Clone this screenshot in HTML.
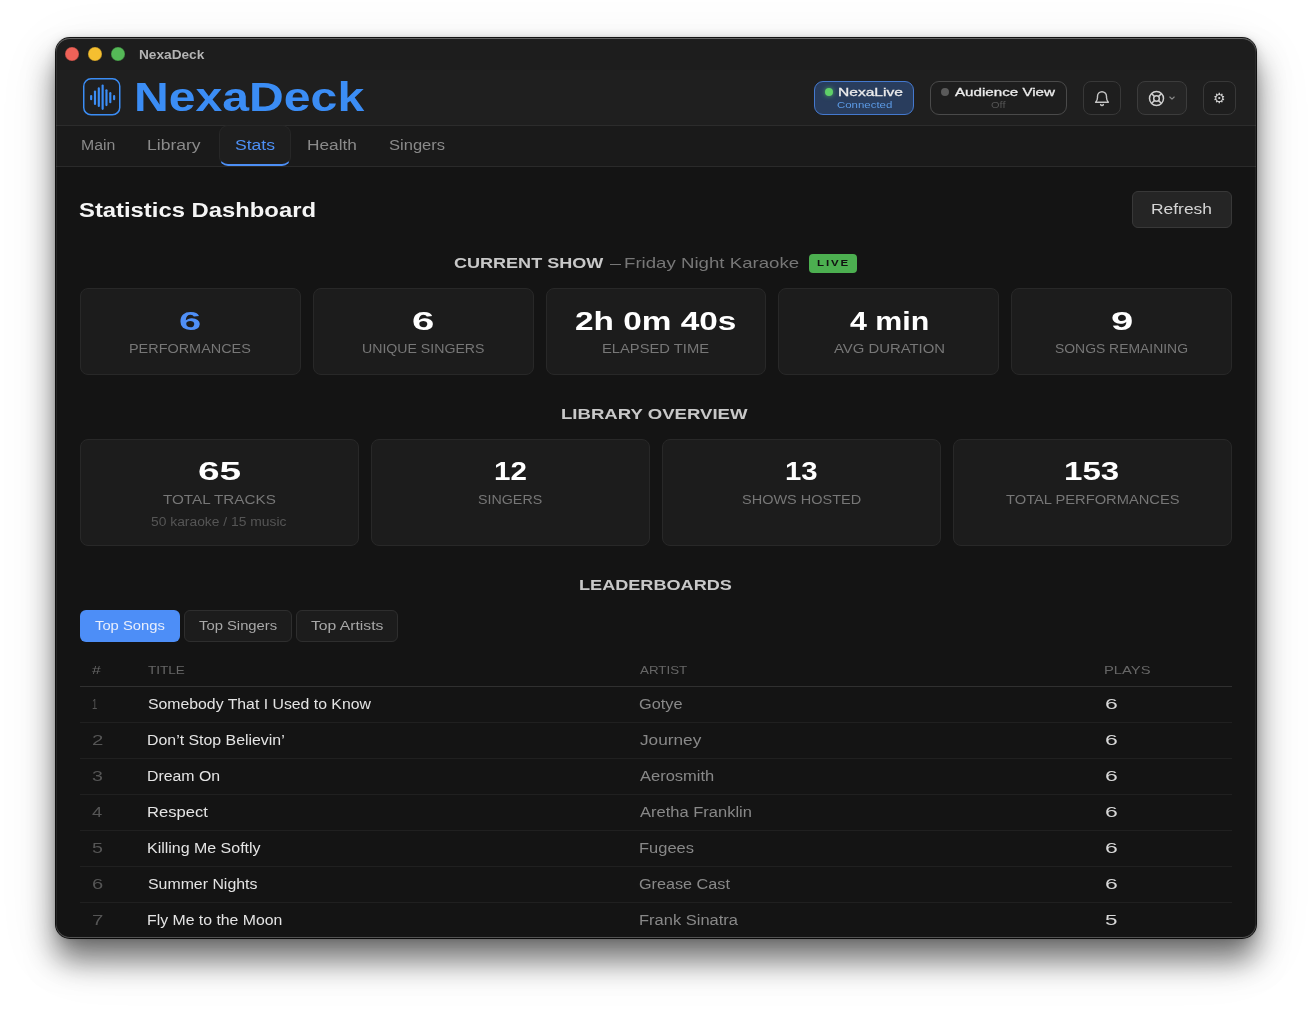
<!DOCTYPE html>
<html lang="en"><head><meta charset="utf-8"><title>NexaDeck</title>
<style>
html,body{margin:0;padding:0;}
body{width:1312px;height:1012px;background:#fff;overflow:hidden;position:relative;font-family:"Liberation Sans", Arial, sans-serif;}
#shadow{position:absolute;left:56px;top:38px;width:1200px;height:900px;border-radius:14px;
box-shadow:0 0 0 1px rgba(0,0,0,.9),0 22px 30px rgba(0,0,0,.52),0 2px 12px rgba(0,0,0,.15),0 16px 60px rgba(0,0,0,.1),0 0 3px rgba(0,0,0,.25);}
#win{position:absolute;left:56px;top:38px;width:1200px;height:900px;border-radius:14px;overflow:hidden;background:#141414;will-change:transform;}
#win:after{content:"";position:absolute;left:0;top:0;right:0;bottom:0;border-radius:14px;box-shadow:inset 0 1px 0 rgba(255,255,255,.28),inset 0 -1px 0 rgba(255,255,255,.22),inset 0 0 0 1px rgba(255,255,255,.07);pointer-events:none;}
.b{position:absolute;}
.t{position:absolute;white-space:nowrap;line-height:1;transform-origin:0 50%;}
</style></head><body>
<div id="shadow"></div>
<div id="win">
<div class="b " style="left:0px;top:0px;width:1200px;height:32px;background:#1d1d1d;"></div>
<div class="b " style="left:0px;top:32px;width:1200px;height:55.5px;background:#1f1f1f;"></div>
<div class="b " style="left:0px;top:87px;width:1200px;height:1px;background:#2c2c2c;"></div>
<div class="b " style="left:0px;top:88px;width:1200px;height:40px;background:#1a1a1a;"></div>
<div class="b " style="left:0px;top:128px;width:1200px;height:1px;background:#2a2a2a;"></div>
<div class="b " style="left:9px;top:9px;width:14px;height:14px;border-radius:50%;background:#ee6258;box-shadow:inset 0 0 0 .5px rgba(0,0,0,.25);"></div>
<div class="b " style="left:32px;top:9px;width:14px;height:14px;border-radius:50%;background:#f5bf30;box-shadow:inset 0 0 0 .5px rgba(0,0,0,.25);"></div>
<div class="b " style="left:55px;top:9px;width:14px;height:14px;border-radius:50%;background:#55b857;box-shadow:inset 0 0 0 .5px rgba(0,0,0,.25);"></div>
<span class="t" id="t0" style="left:83.49px;top:9.80px;font-size:13px;font-weight:700;color:#b4b4b4;transform:scaleX(1.0506);">NexaDeck</span>
<svg class="b" style="left:27.3px;top:40.3px" width="37.5" height="37.6" viewBox="0 0 38 38"><rect x="0.75" y="0.75" width="36.5" height="36.5" rx="7.5" fill="none" stroke="#3b8df5" stroke-width="1.5"/><rect x="7.16" y="17.20" width="2.2" height="5.4" rx="1.1" fill="#3b8df5"/><rect x="11.04" y="12.50" width="2.2" height="14.8" rx="1.1" fill="#3b8df5"/><rect x="14.92" y="9.40" width="2.2" height="20" rx="1.1" fill="#3b8df5"/><rect x="18.80" y="6.50" width="2.2" height="25.8" rx="1.1" fill="#3b8df5"/><rect x="22.68" y="11.30" width="2.2" height="17.2" rx="1.1" fill="#3b8df5"/><rect x="26.56" y="14.20" width="2.2" height="11.4" rx="1.1" fill="#3b8df5"/><rect x="30.44" y="17.20" width="2.2" height="5.4" rx="1.1" fill="#3b8df5"/></svg>
<span class="t" id="t1" style="left:77.58px;top:38.84px;font-size:40px;font-weight:700;color:#3b8df5;transform:scaleX(1.2035);">NexaDeck</span>
<div class="b " style="left:758px;top:43px;width:100px;height:34px;box-sizing:border-box;border:1px solid #4479cf;border-radius:9px;background:#293d5d;"></div>
<div class="b " style="left:769px;top:50px;width:8px;height:8px;border-radius:50%;background:#5fd068;box-shadow:0 0 5px rgba(95,208,104,.7);"></div>
<span class="t" id="t2" style="left:782.22px;top:48.18px;font-size:11.6px;font-weight:400;color:#ececec;transform:scaleX(1.3435);-webkit-text-stroke:0.3px #ececec;">NexaLive</span>
<span class="t" id="t3" style="left:780.72px;top:62.36px;font-size:9.5px;font-weight:400;color:#5c9be6;transform:scaleX(1.2039);">Connected</span>
<div class="b " style="left:874px;top:43px;width:137px;height:34px;box-sizing:border-box;border:1px solid #4a4a4a;border-radius:9px;background:#1e1e1e;"></div>
<div class="b " style="left:885px;top:50px;width:8px;height:8px;border-radius:50%;background:#5a5a5a;"></div>
<span class="t" id="t4" style="left:899.37px;top:48.18px;font-size:11.6px;font-weight:400;color:#ececec;transform:scaleX(1.3066);-webkit-text-stroke:0.3px #ececec;">Audience View</span>
<span class="t" id="t5" style="left:934.98px;top:62.36px;font-size:9.5px;font-weight:400;color:#555;transform:scaleX(1.1608);">Off</span>
<div class="b " style="left:1027px;top:43px;width:38px;height:34px;box-sizing:border-box;border:1px solid #383838;border-radius:8px;background:#1e1e1e;"></div>
<svg class="b" style="left:1038px;top:52px" width="16" height="17" viewBox="0 0 16 17" fill="none" stroke="#c4c4c4" stroke-width="1.4" stroke-linecap="round" stroke-linejoin="round"><path d="M1.6 12.2h12.8c-1.3-1.2-1.9-2.6-1.9-4.6V6.3a4.5 4.5 0 0 0-9 0v1.3c0 2-.6 3.4-1.9 4.6z"/><path d="M6.6 14.6a1.6 1.6 0 0 0 2.8 0"/></svg>
<div class="b " style="left:1081px;top:43px;width:50px;height:34px;box-sizing:border-box;border:1px solid #3c3c3c;border-radius:8px;background:#252525;"></div>
<svg class="b" style="left:1092px;top:51.5px" width="17" height="17" viewBox="0 0 17 17" fill="none" stroke="#cfcfcf" stroke-width="1.5"><circle cx="8.5" cy="8.5" r="7"/><circle cx="8.5" cy="8.5" r="2.8"/><path d="M3.6 3.6l2.9 2.9M13.4 3.6l-2.9 2.9M3.6 13.4l2.9-2.9M13.4 13.4l-2.9-2.9"/></svg>
<svg class="b" style="left:1113px;top:57.8px" width="6" height="5" viewBox="0 0 6 5" fill="none" stroke="#8a8a8a" stroke-width="1.1" stroke-linecap="round" stroke-linejoin="round"><path d="M0.8 1l2.2 2.2L5.2 1"/></svg>
<div class="b " style="left:1147px;top:43px;width:33px;height:34px;box-sizing:border-box;border:1px solid #383838;border-radius:8px;background:#1e1e1e;"></div>
<span class="t" id="t6" style="left:1157.22px;top:53.15px;font-size:14px;font-weight:400;color:#d0d0d0;transform:scaleX(1.0000);font-family:"DejaVu Sans",sans-serif;">⚙</span>
<div class="b " style="left:162.7px;top:87px;width:72.5px;height:41px;box-sizing:border-box;border:1px solid #272727;border-bottom:2px solid #4d8ff5;border-radius:9px;background:#1e1e1e;"></div>
<span class="t" id="t7" style="left:24.90px;top:100.15px;font-size:14px;font-weight:400;color:#8a8a8a;transform:scaleX(1.1313);">Main</span>
<span class="t" id="t8" style="left:91.26px;top:100.15px;font-size:14px;font-weight:400;color:#8a8a8a;transform:scaleX(1.2519);">Library</span>
<span class="t" id="t9" style="left:178.50px;top:100.15px;font-size:14px;font-weight:400;color:#4d90f5;transform:scaleX(1.2548);">Stats</span>
<span class="t" id="t10" style="left:250.78px;top:100.15px;font-size:14px;font-weight:400;color:#8a8a8a;transform:scaleX(1.2340);">Health</span>
<span class="t" id="t11" style="left:332.85px;top:100.15px;font-size:14px;font-weight:400;color:#8a8a8a;transform:scaleX(1.1807);">Singers</span>
<div class="b " style="left:0px;top:129px;width:1200px;height:771px;background:#141414;"></div>
<span class="t" id="t12" style="left:23.31px;top:162.07px;font-size:20px;font-weight:700;color:#f5f5f5;transform:scaleX(1.1911);">Statistics Dashboard</span>
<div class="b " style="left:1076px;top:153px;width:100px;height:37px;box-sizing:border-box;border:1px solid #383838;border-radius:6px;background:#252525;"></div>
<span class="t" id="t13" style="left:1095.17px;top:164.45px;font-size:14px;font-weight:400;color:#d4d4d4;transform:scaleX(1.2435);">Refresh</span>
<span class="t" id="t14" style="left:398.36px;top:217.10px;font-size:15px;font-weight:700;color:#c8c8c8;transform:scaleX(1.2021);">CURRENT SHOW</span>
<span class="t" id="t15" style="left:554.00px;top:217.10px;font-size:15px;font-weight:400;color:#777;transform:scaleX(0.7333);">—</span>
<span class="t" id="t16" style="left:567.87px;top:217.10px;font-size:15px;font-weight:400;color:#777;transform:scaleX(1.2432);">Friday Night Karaoke</span>
<div class="b " style="left:753px;top:216px;width:48px;height:19px;border-radius:4px;background:#4caf50;"></div>
<span class="t" id="t17" style="left:760.53px;top:221.28px;font-size:9px;font-weight:700;color:#111;transform:scaleX(1.2739);letter-spacing:1.5px;">LIVE</span>
<div class="b " style="left:24px;top:250px;width:220.8px;height:87px;box-sizing:border-box;border:1px solid #282828;border-radius:8px;background:#1c1c1c;"></div>
<span class="t" id="t18" style="left:123.29px;top:269.69px;font-size:26px;font-weight:700;color:#4f8ff7;transform:scaleX(1.5356);">6</span>
<span class="t" id="t19" style="left:73.22px;top:304.52px;font-size:12.5px;font-weight:400;color:#777;transform:scaleX(1.1542);">PERFORMANCES</span>
<div class="b " style="left:256.8px;top:250px;width:220.8px;height:87px;box-sizing:border-box;border:1px solid #282828;border-radius:8px;background:#1c1c1c;"></div>
<span class="t" id="t20" style="left:356.03px;top:269.69px;font-size:26px;font-weight:700;color:#fff;transform:scaleX(1.5436);">6</span>
<span class="t" id="t21" style="left:305.76px;top:304.52px;font-size:12.5px;font-weight:400;color:#777;transform:scaleX(1.1300);">UNIQUE SINGERS</span>
<div class="b " style="left:489.6px;top:250px;width:220.8px;height:87px;box-sizing:border-box;border:1px solid #282828;border-radius:8px;background:#1c1c1c;"></div>
<span class="t" id="t22" style="left:519.44px;top:269.69px;font-size:26px;font-weight:700;color:#fff;transform:scaleX(1.2829);">2h 0m 40s</span>
<span class="t" id="t23" style="left:546.19px;top:304.52px;font-size:12.5px;font-weight:400;color:#777;transform:scaleX(1.1793);">ELAPSED TIME</span>
<div class="b " style="left:722.4px;top:250px;width:220.8px;height:87px;box-sizing:border-box;border:1px solid #282828;border-radius:8px;background:#1c1c1c;"></div>
<span class="t" id="t24" style="left:793.89px;top:269.69px;font-size:26px;font-weight:700;color:#fff;transform:scaleX(1.1669);">4 min</span>
<span class="t" id="t25" style="left:777.87px;top:304.52px;font-size:12.5px;font-weight:400;color:#777;transform:scaleX(1.1903);">AVG DURATION</span>
<div class="b " style="left:955.2px;top:250px;width:220.8px;height:87px;box-sizing:border-box;border:1px solid #282828;border-radius:8px;background:#1c1c1c;"></div>
<span class="t" id="t26" style="left:1054.51px;top:269.69px;font-size:26px;font-weight:700;color:#fff;transform:scaleX(1.5404);">9</span>
<span class="t" id="t27" style="left:999.32px;top:304.52px;font-size:12.5px;font-weight:400;color:#777;transform:scaleX(1.1131);">SONGS REMAINING</span>
<span class="t" id="t28" style="left:505.46px;top:368.10px;font-size:15px;font-weight:700;color:#c8c8c8;transform:scaleX(1.2383);">LIBRARY OVERVIEW</span>
<div class="b " style="left:24px;top:401px;width:279px;height:106.5px;box-sizing:border-box;border:1px solid #282828;border-radius:8px;background:#1c1c1c;"></div>
<span class="t" id="t29" style="left:141.73px;top:420.49px;font-size:26px;font-weight:700;color:#fff;transform:scaleX(1.4939);">65</span>
<span class="t" id="t30" style="left:107.26px;top:455.82px;font-size:12.5px;font-weight:400;color:#777;transform:scaleX(1.2184);">TOTAL TRACKS</span>
<div class="b " style="left:315px;top:401px;width:279px;height:106.5px;box-sizing:border-box;border:1px solid #282828;border-radius:8px;background:#1c1c1c;"></div>
<span class="t" id="t31" style="left:437.74px;top:420.49px;font-size:26px;font-weight:700;color:#fff;transform:scaleX(1.1356);">12</span>
<span class="t" id="t32" style="left:422.40px;top:455.82px;font-size:12.5px;font-weight:400;color:#777;transform:scaleX(1.1411);">SINGERS</span>
<div class="b " style="left:606px;top:401px;width:279px;height:106.5px;box-sizing:border-box;border:1px solid #282828;border-radius:8px;background:#1c1c1c;"></div>
<span class="t" id="t33" style="left:728.80px;top:420.49px;font-size:26px;font-weight:700;color:#fff;transform:scaleX(1.1274);">13</span>
<span class="t" id="t34" style="left:685.94px;top:455.82px;font-size:12.5px;font-weight:400;color:#777;transform:scaleX(1.1592);">SHOWS HOSTED</span>
<div class="b " style="left:897px;top:401px;width:279px;height:106.5px;box-sizing:border-box;border:1px solid #282828;border-radius:8px;background:#1c1c1c;"></div>
<span class="t" id="t35" style="left:1008.47px;top:420.49px;font-size:26px;font-weight:700;color:#fff;transform:scaleX(1.2720);">153</span>
<span class="t" id="t36" style="left:949.92px;top:455.82px;font-size:12.5px;font-weight:400;color:#777;transform:scaleX(1.1747);">TOTAL PERFORMANCES</span>
<span class="t" id="t37" style="left:95.40px;top:477.54px;font-size:12px;font-weight:400;color:#555;transform:scaleX(1.1536);">50 karaoke / 15 music</span>
<span class="t" id="t38" style="left:522.79px;top:539.10px;font-size:15px;font-weight:700;color:#c8c8c8;transform:scaleX(1.2072);">LEADERBOARDS</span>
<div class="b " style="left:24px;top:572.3px;width:100px;height:31.5px;border-radius:6px;background:#4d8ef7;"></div>
<div class="b " style="left:128.2px;top:572.3px;width:107.7px;height:31.5px;box-sizing:border-box;border:1px solid #2e2e2e;border-radius:6px;background:#1c1c1c;"></div>
<div class="b " style="left:240.2px;top:572.3px;width:101.4px;height:31.5px;box-sizing:border-box;border:1px solid #2e2e2e;border-radius:6px;background:#1c1c1c;"></div>
<span class="t" id="t39" style="left:38.97px;top:580.90px;font-size:13px;font-weight:400;color:#e8eefc;transform:scaleX(1.1356);">Top Songs</span>
<span class="t" id="t40" style="left:143.07px;top:580.90px;font-size:13px;font-weight:400;color:#a8a8a8;transform:scaleX(1.1386);">Top Singers</span>
<span class="t" id="t41" style="left:255.05px;top:580.90px;font-size:13px;font-weight:400;color:#a8a8a8;transform:scaleX(1.2077);">Top Artists</span>
<span class="t" id="t42" style="left:36.03px;top:626.59px;font-size:11px;font-weight:400;color:#666;transform:scaleX(1.4296);">#</span>
<span class="t" id="t43" style="left:92.40px;top:626.59px;font-size:11px;font-weight:400;color:#666;transform:scaleX(1.2316);">TITLE</span>
<span class="t" id="t44" style="left:584.17px;top:626.59px;font-size:11px;font-weight:400;color:#666;transform:scaleX(1.2138);">ARTIST</span>
<span class="t" id="t45" style="left:1048.49px;top:626.59px;font-size:11px;font-weight:400;color:#666;transform:scaleX(1.3417);">PLAYS</span>
<div class="b " style="left:24px;top:648px;width:1152px;height:1px;background:#303030;"></div>
<span class="t" id="t46" style="left:35.88px;top:659.45px;font-size:14px;font-weight:400;color:#555;transform:scaleX(0.6792);">1</span>
<span class="t" id="t47" style="left:91.68px;top:659.45px;font-size:14px;font-weight:400;color:#e4e4e4;transform:scaleX(1.1290);">Somebody That I Used to Know</span>
<span class="t" id="t48" style="left:583.38px;top:659.45px;font-size:14px;font-weight:400;color:#888;transform:scaleX(1.1658);">Gotye</span>
<span class="t" id="t49" style="left:1048.53px;top:659.45px;font-size:14px;font-weight:400;color:#d8d8d8;transform:scaleX(1.6409);">6</span>
<div class="b " style="left:24px;top:684px;width:1152px;height:1px;background:#202020;"></div>
<span class="t" id="t50" style="left:35.57px;top:695.45px;font-size:14px;font-weight:400;color:#555;transform:scaleX(1.4582);">2</span>
<span class="t" id="t51" style="left:91.10px;top:695.45px;font-size:14px;font-weight:400;color:#e4e4e4;transform:scaleX(1.1342);">Don’t Stop Believin’</span>
<span class="t" id="t52" style="left:583.93px;top:695.45px;font-size:14px;font-weight:400;color:#888;transform:scaleX(1.2308);">Journey</span>
<span class="t" id="t53" style="left:1048.53px;top:695.45px;font-size:14px;font-weight:400;color:#d8d8d8;transform:scaleX(1.6409);">6</span>
<div class="b " style="left:24px;top:720px;width:1152px;height:1px;background:#202020;"></div>
<span class="t" id="t54" style="left:35.85px;top:731.45px;font-size:14px;font-weight:400;color:#555;transform:scaleX(1.4011);">3</span>
<span class="t" id="t55" style="left:91.10px;top:731.45px;font-size:14px;font-weight:400;color:#e4e4e4;transform:scaleX(1.1325);">Dream On</span>
<span class="t" id="t56" style="left:584.17px;top:731.45px;font-size:14px;font-weight:400;color:#888;transform:scaleX(1.1790);">Aerosmith</span>
<span class="t" id="t57" style="left:1048.53px;top:731.45px;font-size:14px;font-weight:400;color:#d8d8d8;transform:scaleX(1.6409);">6</span>
<div class="b " style="left:24px;top:756px;width:1152px;height:1px;background:#202020;"></div>
<span class="t" id="t58" style="left:36.18px;top:767.45px;font-size:14px;font-weight:400;color:#555;transform:scaleX(1.3183);">4</span>
<span class="t" id="t59" style="left:91.04px;top:767.45px;font-size:14px;font-weight:400;color:#e4e4e4;transform:scaleX(1.1835);">Respect</span>
<span class="t" id="t60" style="left:584.17px;top:767.45px;font-size:14px;font-weight:400;color:#888;transform:scaleX(1.1788);">Aretha Franklin</span>
<span class="t" id="t61" style="left:1048.53px;top:767.45px;font-size:14px;font-weight:400;color:#d8d8d8;transform:scaleX(1.6409);">6</span>
<div class="b " style="left:24px;top:792px;width:1152px;height:1px;background:#202020;"></div>
<span class="t" id="t62" style="left:35.81px;top:803.45px;font-size:14px;font-weight:400;color:#555;transform:scaleX(1.4011);">5</span>
<span class="t" id="t63" style="left:91.09px;top:803.45px;font-size:14px;font-weight:400;color:#e4e4e4;transform:scaleX(1.1400);">Killing Me Softly</span>
<span class="t" id="t64" style="left:582.85px;top:803.45px;font-size:14px;font-weight:400;color:#888;transform:scaleX(1.1767);">Fugees</span>
<span class="t" id="t65" style="left:1048.53px;top:803.45px;font-size:14px;font-weight:400;color:#d8d8d8;transform:scaleX(1.6409);">6</span>
<div class="b " style="left:24px;top:828px;width:1152px;height:1px;background:#202020;"></div>
<span class="t" id="t66" style="left:35.58px;top:839.45px;font-size:14px;font-weight:400;color:#555;transform:scaleX(1.4396);">6</span>
<span class="t" id="t67" style="left:91.68px;top:839.45px;font-size:14px;font-weight:400;color:#e4e4e4;transform:scaleX(1.1340);">Summer Nights</span>
<span class="t" id="t68" style="left:583.39px;top:839.45px;font-size:14px;font-weight:400;color:#888;transform:scaleX(1.1571);">Grease Cast</span>
<span class="t" id="t69" style="left:1048.53px;top:839.45px;font-size:14px;font-weight:400;color:#d8d8d8;transform:scaleX(1.6409);">6</span>
<div class="b " style="left:24px;top:864px;width:1152px;height:1px;background:#202020;"></div>
<span class="t" id="t70" style="left:35.55px;top:875.45px;font-size:14px;font-weight:400;color:#555;transform:scaleX(1.4613);">7</span>
<span class="t" id="t71" style="left:91.10px;top:875.45px;font-size:14px;font-weight:400;color:#e4e4e4;transform:scaleX(1.1293);">Fly Me to the Moon</span>
<span class="t" id="t72" style="left:582.85px;top:875.45px;font-size:14px;font-weight:400;color:#888;transform:scaleX(1.1775);">Frank Sinatra</span>
<span class="t" id="t73" style="left:1048.80px;top:875.45px;font-size:14px;font-weight:400;color:#d8d8d8;transform:scaleX(1.5969);">5</span>
</div>
</body></html>
